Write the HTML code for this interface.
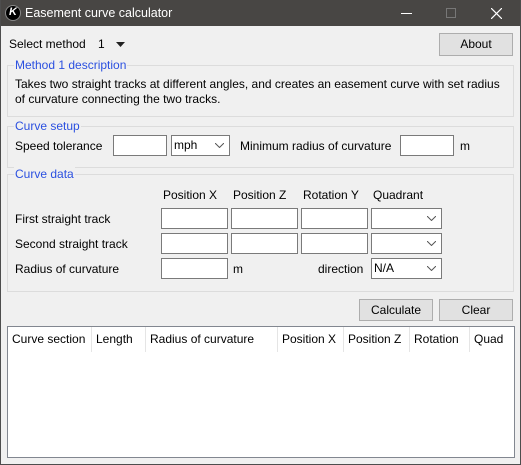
<!DOCTYPE html>
<html><head><style>
*{margin:0;padding:0;box-sizing:border-box}
body{width:521px;height:465px;background:#f0f0f0;font-family:"Liberation Sans",sans-serif;font-size:12px;color:#000;position:relative;overflow:hidden}
.a{position:absolute;white-space:nowrap}
.win{position:absolute;left:0;top:0;width:521px;height:465px;border:1px solid #4d4d4d;border-top:none}
.title{position:absolute;left:0;top:0;width:521px;height:26px;background:#484644;color:#fff}
.fr{position:absolute;border:1px solid #dcdcdc}
.lbl{position:absolute;color:#2b50e0;background:#f0f0f0;padding:0 1px;font-size:12px}
.in{position:absolute;background:#fff;border:1px solid #7a7a7a}
.btn{position:absolute;background:#e1e1e1;border:1px solid #adadad;text-align:center;line-height:20px}
.sel{position:absolute;background:#fff;border:1px solid #7a7a7a;padding-left:2px;line-height:18px}
.sel svg{position:absolute;right:5px;top:7px}
.col{position:absolute;top:0;height:25px;border-right:1px solid #e5e5e5;line-height:25px;padding-left:4px}
</style></head><body>
<div class="title">
 <div class="a" style="left:5px;top:5px;width:16px;height:16px;border-radius:50%;background:#000;border:1px solid #888"></div>
 <div class="a" style="left:9px;top:6px;font-size:11px;font-style:italic;font-weight:bold;color:#fff">K</div>
 <div class="a" style="left:25px;top:6px;font-size:12.5px">Easement curve calculator</div>
 <div class="a" style="left:401px;top:13px;width:11px;height:1px;background:#fff"></div>
 <div class="a" style="left:446px;top:8px;width:10px;height:10px;border:1px solid #777"></div>
 <svg class="a" style="left:491px;top:8px" width="11" height="11"><path d="M0 0L11 11M11 0L0 11" stroke="#fff" stroke-width="1.2"/></svg>
</div>
<div class="win"></div>
<div class="a" style="left:9px;top:37px">Select method</div>
<div class="a" style="left:98px;top:37px">1</div>
<svg class="a" style="left:116px;top:42px" width="9" height="5"><path d="M0 0H9L4.5 5Z" fill="#222"/></svg>
<div class="btn" style="left:439px;top:33px;width:74px;height:23px">About</div>

<div class="fr" style="left:7px;top:65px;width:507px;height:52px"></div>
<div class="lbl" style="left:14px;top:58px">Method 1 description</div>
<div class="a" style="left:15px;top:77px">Takes two straight tracks at different angles, and creates an easement curve with set radius</div>
<div class="a" style="left:15px;top:92px">of curvature connecting the two tracks.</div>

<div class="fr" style="left:7px;top:126px;width:507px;height:42px"></div>
<div class="lbl" style="left:14px;top:119px">Curve setup</div>
<div class="a" style="left:15px;top:139px">Speed tolerance</div>
<div class="in" style="left:113px;top:135px;width:54px;height:21px"></div>
<div class="sel" style="left:171px;top:135px;width:59px;height:21px">mph<svg width="9" height="5"><path d="M0 0L4.5 4.5L9 0" stroke="#555" fill="none"/></svg></div>
<div class="a" style="left:240px;top:139px">Minimum radius of curvature</div>
<div class="in" style="left:400px;top:135px;width:54px;height:21px"></div>
<div class="a" style="left:460px;top:139px">m</div>

<div class="fr" style="left:7px;top:174px;width:507px;height:118px"></div>
<div class="lbl" style="left:14px;top:167px">Curve data</div>
<div class="a" style="left:163px;top:188px">Position X</div>
<div class="a" style="left:233px;top:188px">Position Z</div>
<div class="a" style="left:303px;top:188px">Rotation Y</div>
<div class="a" style="left:373px;top:188px">Quadrant</div>
<div class="a" style="left:15px;top:212px">First straight track</div>
<div class="a" style="left:15px;top:237px">Second straight track</div>
<div class="a" style="left:15px;top:262px">Radius of curvature</div>
<div class="in" style="left:161px;top:208px;width:67px;height:21px"></div>
<div class="in" style="left:231px;top:208px;width:67px;height:21px"></div>
<div class="in" style="left:301px;top:208px;width:67px;height:21px"></div>
<div class="sel" style="left:371px;top:208px;width:71px;height:21px"><svg width="9" height="5"><path d="M0 0L4.5 4.5L9 0" stroke="#555" fill="none"/></svg></div>
<div class="in" style="left:161px;top:233px;width:67px;height:21px"></div>
<div class="in" style="left:231px;top:233px;width:67px;height:21px"></div>
<div class="in" style="left:301px;top:233px;width:67px;height:21px"></div>
<div class="sel" style="left:371px;top:233px;width:71px;height:21px"><svg width="9" height="5"><path d="M0 0L4.5 4.5L9 0" stroke="#555" fill="none"/></svg></div>
<div class="in" style="left:161px;top:258px;width:67px;height:21px"></div>
<div class="a" style="left:233px;top:262px">m</div>
<div class="a" style="left:318px;top:262px">direction</div>
<div class="sel" style="left:371px;top:258px;width:71px;height:21px">N/A<svg width="9" height="5"><path d="M0 0L4.5 4.5L9 0" stroke="#555" fill="none"/></svg></div>

<div class="btn" style="left:359px;top:299px;width:74px;height:22px">Calculate</div>
<div class="btn" style="left:439px;top:299px;width:74px;height:22px">Clear</div>

<div class="a" style="left:7px;top:326px;width:508px;height:132px;background:#fff;border:1px solid #828790">
 <div class="col" style="left:0;width:84px">Curve section</div>
 <div class="col" style="left:84px;width:54px">Length</div>
 <div class="col" style="left:138px;width:132px">Radius of curvature</div>
 <div class="col" style="left:270px;width:66px">Position X</div>
 <div class="col" style="left:336px;width:66px">Position Z</div>
 <div class="col" style="left:402px;width:60px">Rotation</div>
 <div class="col" style="left:462px;width:44px;border-right:none">Quad</div>
</div>
</body></html>
